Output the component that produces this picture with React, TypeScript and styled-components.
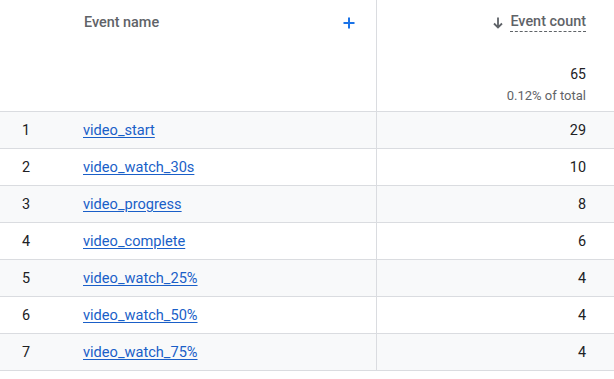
import React from "react";
import styled, { createGlobalStyle } from "styled-components";

const GlobalStyle = createGlobalStyle`
  html, body {
    margin: 0;
    padding: 0;
    background: #ffffff;
    font-family: Roboto, "Noto Sans", Arial, sans-serif;
  }
`;

const colors = {
  text: "#202124",
  muted: "#5f6368",
  link: "#1a5fc8",
  border: "#dadce0",
  stripe: "#f8f9fa",
  accent: "#1a73e8",
};

const StyledTable = styled.section`
  width: 614px;
  color: ${colors.text};
`;

const StyledRow = styled.div<{ $striped?: boolean; $height: number }>`
  display: grid;
  grid-template-columns: 83px 293px 238px;
  height: ${(p) => p.$height}px;
  box-sizing: border-box;
  border-bottom: 1px solid ${colors.border};
  background-color: ${(p) => (p.$striped ? colors.stripe : "#ffffff")};
`;

const StyledIndexCell = styled.div`
  display: flex;
  align-items: center;
  padding-left: 22px;
  font-size: 14.4px;
`;

const StyledNameCell = styled.div`
  display: flex;
  align-items: center;
  padding-right: 22px;
`;

const StyledCountCell = styled.div`
  display: flex;
  align-items: center;
  justify-content: flex-end;
  border-left: 1px solid ${colors.border};
  padding-right: 28px;
  font-size: 14.4px;
`;

const StyledHeaderName = styled.div`
  display: flex;
  align-items: flex-start;
  justify-content: space-between;
  padding: 14px 21px 0 1px;
  font-size: 14.4px;
  font-weight: 500;
  color: ${colors.muted};
`;

const StyledHeaderCount = styled.div`
  display: flex;
  flex-direction: column;
  align-items: flex-end;
  border-left: 1px solid ${colors.border};
  padding: 13px 28px 0 0;
`;

const StyledSortTitle = styled.div`
  display: flex;
  align-items: center;
  gap: 7px;
  font-size: 14.4px;
  font-weight: 500;
  color: ${colors.muted};
`;

const StyledDashed = styled.span`
  border-bottom: 1px dashed ${colors.muted};
  padding-bottom: 1px;
`;

const StyledTotal = styled.div`
  margin-top: 34px;
  font-size: 14px;
  color: ${colors.text};
`;

const StyledPercent = styled.div`
  margin-top: 6px;
  font-size: 13px;
  color: ${colors.muted};
`;

const StyledLink = styled.a`
  font-size: 14.6px;
  color: ${colors.link};
  text-decoration: underline;
  text-underline-offset: 2px;
  cursor: pointer;
`;

const StyledPlus = styled.svg`
  margin-top: 3px;
`;

const events = [
  { name: "video_start", count: 29 },
  { name: "video_watch_30s", count: 10 },
  { name: "video_progress", count: 8 },
  { name: "video_complete", count: 6 },
  { name: "video_watch_25%", count: 4 },
  { name: "video_watch_50%", count: 4 },
  { name: "video_watch_75%", count: 4 },
];

export default function App() {
  return (
    <>
      <GlobalStyle />
      <StyledTable>
        <StyledRow $height={112}>
          <div />
          <StyledHeaderName>
            <span>Event name</span>
            <StyledPlus width="12" height="12" viewBox="0 0 12 12">
              <path d="M6 0.5v11M0.5 6h11" stroke={colors.accent} strokeWidth="2" />
            </StyledPlus>
          </StyledHeaderName>
          <StyledHeaderCount>
            <StyledSortTitle>
              <svg width="10" height="12" viewBox="0 0 10 12">
                <path d="M5 0.5v10M1 6.5l4 4 4-4" stroke={colors.muted} strokeWidth="1.8" fill="none" />
              </svg>
              <StyledDashed>Event count</StyledDashed>
            </StyledSortTitle>
            <StyledTotal>65</StyledTotal>
            <StyledPercent>0.12% of total</StyledPercent>
          </StyledHeaderCount>
        </StyledRow>
        {events.map((e, i) => (
          <StyledRow key={e.name} $height={37} $striped={i % 2 === 0}>
            <StyledIndexCell>{i + 1}</StyledIndexCell>
            <StyledNameCell>
              <StyledLink>{e.name}</StyledLink>
            </StyledNameCell>
            <StyledCountCell>{e.count}</StyledCountCell>
          </StyledRow>
        ))}
      </StyledTable>
    </>
  );
}
